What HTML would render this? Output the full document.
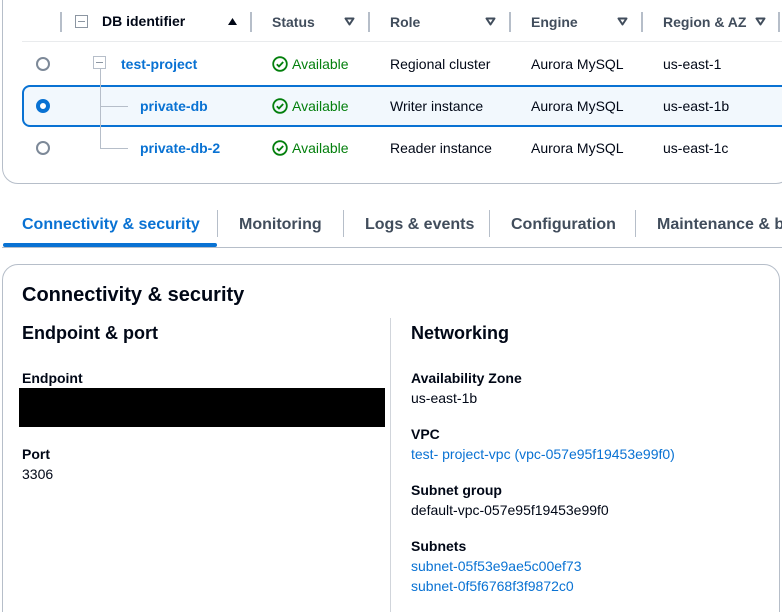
<!DOCTYPE html>
<html><head><meta charset="utf-8"><style>
*{margin:0;padding:0;box-sizing:border-box}
html,body{width:782px;height:612px;overflow:hidden}
body{background:#fff;font-family:"Liberation Sans",sans-serif;color:#000716;font-size:14px}
#w{position:relative;width:782px;height:612px;overflow:hidden}
.a{position:absolute;white-space:nowrap}
.h{font-weight:bold;color:#414d5c;font-size:14px}
.lk{color:#0972d3;font-weight:bold}
.lk2{color:#0972d3}
.av{color:#037f0c}
.sep{position:absolute;width:2px;height:20px;background:#b6bec9;top:12px}
.radio{position:absolute;width:14px;height:14px;border:2px solid #7d8998;border-radius:50%;left:36px}
.b{font-weight:bold}
.t{position:absolute;top:17px}
</style></head><body><div id="w">
<!-- top card -->
<div class="a" style="left:2px;top:-30px;width:790px;height:214px;border:1px solid #b6bec9;border-radius:16px"></div>
<div class="a" style="left:22px;top:41px;width:760px;height:1px;background:#e9ebed"></div>
<div class="sep" style="left:60px"></div>
<div class="a" style="left:75px;top:15px;width:13px;height:13px;border:1px solid #8c96a2"></div>
<div class="a" style="left:78px;top:21px;width:7px;height:1px;background:#8c96a2"></div>
<div class="a h" style="left:102px;top:13px;color:#000716">DB identifier</div>
<svg class="t" style="left:227px" width="11" height="9" viewBox="0 0 11 9"><path d="M5.5 1L10 8H1z" fill="#000716"/></svg>
<div class="sep" style="left:250px"></div>
<div class="a h" style="left:272px;top:14px">Status</div>
<svg class="t" style="left:344px" width="11" height="9" viewBox="0 0 11 9"><path d="M1.5 1.5h8L5.5 7.5z" fill="none" stroke="#414d5c" stroke-width="2" stroke-linejoin="round"/></svg>
<div class="sep" style="left:368px"></div>
<div class="a h" style="left:390px;top:14px">Role</div>
<svg class="t" style="left:485px" width="11" height="9" viewBox="0 0 11 9"><path d="M1.5 1.5h8L5.5 7.5z" fill="none" stroke="#414d5c" stroke-width="2" stroke-linejoin="round"/></svg>
<div class="sep" style="left:509px"></div>
<div class="a h" style="left:531px;top:14px">Engine</div>
<svg class="t" style="left:617px" width="11" height="9" viewBox="0 0 11 9"><path d="M1.5 1.5h8L5.5 7.5z" fill="none" stroke="#414d5c" stroke-width="2" stroke-linejoin="round"/></svg>
<div class="sep" style="left:641px"></div>
<div class="a h" style="left:663px;top:14px">Region &amp; AZ</div>
<svg class="t" style="left:755px" width="11" height="9" viewBox="0 0 11 9"><path d="M1.5 1.5h8L5.5 7.5z" fill="none" stroke="#414d5c" stroke-width="2" stroke-linejoin="round"/></svg>
<div class="sep" style="left:778px"></div>
<!-- selected row -->
<div class="a" style="left:22px;top:85px;width:790px;height:42px;border:2px solid #0972d3;border-radius:8px;background:#f2f8fd"></div>
<!-- tree -->
<div class="a" style="left:93px;top:56px;width:13px;height:13px;border:1px solid #b6bec9"></div>
<div class="a" style="left:96px;top:62px;width:7px;height:1px;background:#8c96a2"></div>
<div class="a" style="left:100px;top:69px;width:1px;height:80px;background:#b6bec9"></div>
<div class="a" style="left:100px;top:106px;width:28px;height:1px;background:#b6bec9"></div>
<div class="a" style="left:100px;top:148px;width:28px;height:1px;background:#b6bec9"></div>
<div class="radio" style="top:57px"></div>
<div class="radio" style="top:99px;border:4px solid #0972d3;background:#fff"></div>
<div class="radio" style="top:141px"></div>
<div class="a lk" style="left:121px;top:56px">test-project</div>
<div class="a lk" style="left:140px;top:98px">private-db</div>
<div class="a lk" style="left:140px;top:140px">private-db-2</div>
<svg class="a" style="left:272px;top:56px" width="16" height="16" viewBox="0 0 16 16"><circle cx="8" cy="8" r="6.8" fill="none" stroke="#037f0c" stroke-width="1.8"/><path d="M4.8 8.2l2.2 2.2 4.2-4.4" fill="none" stroke="#037f0c" stroke-width="1.8"/></svg>
<svg class="a" style="left:272px;top:98px" width="16" height="16" viewBox="0 0 16 16"><circle cx="8" cy="8" r="6.8" fill="none" stroke="#037f0c" stroke-width="1.8"/><path d="M4.8 8.2l2.2 2.2 4.2-4.4" fill="none" stroke="#037f0c" stroke-width="1.8"/></svg>
<svg class="a" style="left:272px;top:140px" width="16" height="16" viewBox="0 0 16 16"><circle cx="8" cy="8" r="6.8" fill="none" stroke="#037f0c" stroke-width="1.8"/><path d="M4.8 8.2l2.2 2.2 4.2-4.4" fill="none" stroke="#037f0c" stroke-width="1.8"/></svg>
<div class="a av" style="left:292px;top:56px">Available</div>
<div class="a av" style="left:292px;top:98px">Available</div>
<div class="a av" style="left:292px;top:140px">Available</div>
<div class="a" style="left:390px;top:56px">Regional cluster</div>
<div class="a" style="left:390px;top:98px">Writer instance</div>
<div class="a" style="left:390px;top:140px">Reader instance</div>
<div class="a" style="left:531px;top:56px">Aurora MySQL</div>
<div class="a" style="left:531px;top:98px">Aurora MySQL</div>
<div class="a" style="left:531px;top:140px">Aurora MySQL</div>
<div class="a" style="left:663px;top:56px">us-east-1</div>
<div class="a" style="left:663px;top:98px">us-east-1b</div>
<div class="a" style="left:663px;top:140px">us-east-1c</div>
<!-- tabs -->
<div class="a" style="left:2px;top:247px;width:780px;height:1px;background:#b6bec9"></div>
<div class="a" style="left:3px;top:243px;width:214px;height:4px;background:#0972d3;border-radius:2px"></div>
<div class="a" style="left:22px;top:216px;font-size:16px;font-weight:bold;color:#0972d3">Connectivity &amp; security</div>
<div class="a" style="left:217px;top:210px;width:1px;height:27px;background:#b6bec9"></div>
<div class="a" style="left:239px;top:216px;font-size:16px;font-weight:bold;color:#414d5c">Monitoring</div>
<div class="a" style="left:343px;top:210px;width:1px;height:27px;background:#b6bec9"></div>
<div class="a" style="left:365px;top:216px;font-size:16px;font-weight:bold;color:#414d5c">Logs &amp; events</div>
<div class="a" style="left:489px;top:210px;width:1px;height:27px;background:#b6bec9"></div>
<div class="a" style="left:511px;top:216px;font-size:16px;font-weight:bold;color:#414d5c">Configuration</div>
<div class="a" style="left:635px;top:210px;width:1px;height:27px;background:#b6bec9"></div>
<div class="a" style="left:657px;top:216px;font-size:16px;font-weight:bold;color:#414d5c">Maintenance &amp; b</div>
<!-- bottom card -->
<div class="a" style="left:2px;top:264px;width:778px;height:400px;border:1px solid #b6bec9;border-radius:16px"></div>
<div class="a b" style="left:22px;top:284px;font-size:20px">Connectivity &amp; security</div>
<div class="a" style="left:390px;top:318px;width:1px;height:300px;background:#d1d5db"></div>
<div class="a b" style="left:22px;top:323px;font-size:18px">Endpoint &amp; port</div>
<div class="a b" style="left:22px;top:370px">Endpoint</div>
<div class="a" style="left:19px;top:388px;width:366px;height:39px;background:#000"></div>
<div class="a b" style="left:22px;top:446px">Port</div>
<div class="a" style="left:22px;top:466px">3306</div>
<div class="a b" style="left:411px;top:323px;font-size:18px">Networking</div>
<div class="a b" style="left:411px;top:370px">Availability Zone</div>
<div class="a" style="left:411px;top:390px">us-east-1b</div>
<div class="a b" style="left:411px;top:426px">VPC</div>
<div class="a lk2" style="left:411px;top:446px">test- project-vpc (vpc-057e95f19453e99f0)</div>
<div class="a b" style="left:411px;top:482px">Subnet group</div>
<div class="a" style="left:411px;top:502px">default-vpc-057e95f19453e99f0</div>
<div class="a b" style="left:411px;top:538px">Subnets</div>
<div class="a lk2" style="left:411px;top:558px">subnet-05f53e9ae5c00ef73</div>
<div class="a lk2" style="left:411px;top:578px">subnet-0f5f6768f3f9872c0</div>
</div></body></html>
